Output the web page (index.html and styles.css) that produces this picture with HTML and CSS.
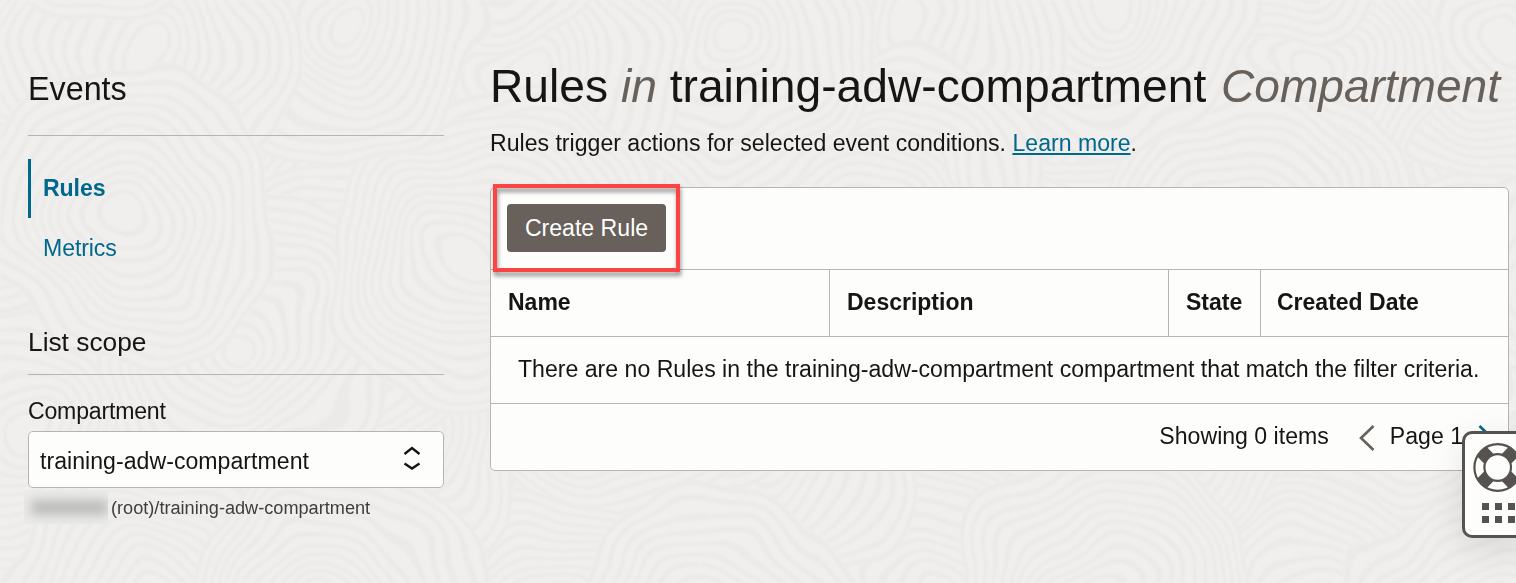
FILE: index.html
```html
<!DOCTYPE html>
<html lang="en">
<head>
<meta charset="utf-8">
<title>Events</title>
<link rel="stylesheet" href="styles.css">
</head>
<body>
<svg class="texture" width="1516" height="583" viewBox="0 0 1516 583" aria-hidden="true">
  <defs>
    <filter id="sand" x="0" y="0" width="1516" height="583" filterUnits="userSpaceOnUse" color-interpolation-filters="sRGB">
      <feTurbulence type="fractalNoise" baseFrequency=".008" numOctaves="2" seed="4" result="noise"/>
      <feDisplacementMap in="SourceGraphic" in2="noise" scale="70" xChannelSelector="R" yChannelSelector="G"/>
      <feGaussianBlur stdDeviation="1.1"/>
    </filter>
    <g id="ripple">
      <circle r="150" fill="#f0efed" stroke="none"/>
      <circle r="147"/><circle r="136"/><circle r="124"/><circle r="113"/><circle r="102"/><circle r="90"/><circle r="79"/><circle r="67"/><circle r="56"/><circle r="44"/><circle r="33"/><circle r="21"/>
    </g>
    <g id="waves">
      <use href="#ripple" x="385" y="430"/>
      <use href="#ripple" x="330" y="315"/>
      <use href="#ripple" x="20" y="430"/>
      <use href="#ripple" x="240" y="340"/>
      <use href="#ripple" x="470" y="260"/>
      <use href="#ripple" x="-10" y="180"/>
      <use href="#ripple" x="340" y="20"/>
      <use href="#ripple" x="140" y="50"/>
      <use href="#ripple" x="125" y="215"/>
      <use href="#ripple" x="110" y="-125"/>
      <use href="#ripple" x="150" y="610"/>
      <use href="#ripple" x="330" y="610"/>
    </g>
  </defs>
  <g filter="url(#sand)">
    <rect width="1516" height="583" fill="#f0efed"/>
    <g fill="none" stroke="#ebeae8" stroke-width="4">
      <use href="#waves" x="1540" y="-30"/>
      <use href="#waves" x="1155" y="20"/>
      <use href="#waves" x="770" y="-20"/>
      <use href="#waves" x="385" y="25"/>
      <use href="#waves"/>
    </g>
  </g>
</svg>
<div class="page">
  <aside class="sidebar">
    <h2 class="service">Events</h2>
    <nav class="nav">
      <a class="nav-item active">Rules</a>
      <a class="nav-item">Metrics</a>
    </nav>
    <h3 class="scope">List scope</h3>
    <div class="label">Compartment</div>
    <div class="select"><span>training-adw-compartment</span>
      <svg width="18" height="26" viewBox="0 0 18 26" fill="none" stroke="#161513" stroke-width="2.4"><path d="M1.500 8 9 2l7.500 6M1.500 17.500 9 22.500l7.500-5"/></svg>
    </div>
    <div class="path"><span class="redacted"><i></i></span><span>(root)/training-adw-compartment</span></div>
  </aside>
  <main class="main">
    <h1 class="title">Rules <em>in</em> training-adw-compartment <em class="kind">Compartment</em></h1>
    <p class="intro">Rules trigger actions for selected event conditions. <a class="link">Learn more</a>.</p>
    <section class="panel">
      <div class="toolbar"><button class="create">Create Rule</button><span class="highlight"></span></div>
      <div class="head"><div>Name</div><div>Description</div><div>State</div><div>Created Date</div></div>
      <div class="empty">There are no Rules in the training-adw-compartment compartment that match the filter criteria.</div>
      <div class="pager"><span>Showing 0 items</span>
        <svg class="prev" width="16" height="28" viewBox="0 0 16 28" fill="none" stroke="#67605b" stroke-width="2.6"><path d="M14.500 2 2 14l12.500 12"/></svg>
        <span class="page-no">Page 1</span>
        <svg class="next" width="16" height="28" viewBox="0 0 16 28" fill="none" stroke="#00688c" stroke-width="2.6"><path d="M1.500 2 14 14 1.500 26"/></svg>
      </div>
    </section>
  </main>
</div>
<div class="help">
  <svg width="52" height="101" viewBox="0 0 52 101">
    <g transform="translate(32.700 33.500)" fill="none" stroke="#56524f">
      <path transform="rotate(45)" stroke-width="13.500" d="M-22.500 0h10M12.500 0h10M0-22.500v10M0 12.500v10"/>
      <circle r="23.300" stroke-width="2.200"/>
      <circle r="13.300" fill="#fdfdfb" stroke-width="2.200"/>
    </g>
    <path fill="#56524f" d="M17 69h7v7h-7zM30 69h7v7h-7zM43 69h7v7h-7zM17 82h7v7h-7zM30 82h7v7h-7zM43 82h7v7h-7z"/>
  </svg>
</div>
</body>
</html>
```
FILE: styles.css
```css
* { box-sizing: border-box; }
body { margin: 0; width: 1516px; height: 583px; overflow: hidden; position: relative; background: #f0efed; color: #161513; font: 23.1px/28px "Liberation Sans", Arial, sans-serif; }
.texture { position: absolute; left: 0; top: 0; }
.page { position: relative; display: flex; width: 1516px; padding-left: 28px; gap: 46px; }
.sidebar { width: 416px; flex: none; }
.service { margin: 0; height: 136px; padding-top: 69px; border-bottom: 1px solid #b8b5b0; font-size: 32.300px; line-height: 40px; font-weight: 400; }
.nav { padding-top: 23px; }
.nav-item { display: block; height: 59px; padding: 16px 0 0 15px; color: #00688c; letter-spacing: -.1px; }
.nav-item.active { border-left: 3px solid #00688c; padding: 15px 0 0 12px; font-weight: 700; }
.scope { margin: 48px 0 0; height: 50px; border-bottom: 1px solid #b8b5b0; font-size: 26.300px; line-height: 34px; font-weight: 400; }
.label { margin-top: 22px; height: 34px; letter-spacing: -.2px; }
.select { height: 57px; display: flex; align-items: center; justify-content: space-between; padding: 3px 22px 0 11px; border: 1px solid #b8b5b0; border-radius: 5px; background: #fdfdfb; }
.select svg { margin-bottom: 5px; }
.select span { letter-spacing: .03px; }
.path { display: flex; align-items: center; height: 40px; gap: 3px; margin-left: -4px; font-size: 18.150px; color: #403d3a; }
.redacted { width: 84px; height: 34px; margin-top: -2px; padding: 11px 0 0 7px; background: #ebebe9; overflow: hidden; }
.redacted i { display: block; height: 13px; background: #b4b4b3; filter: blur(6px); }
.main { width: 1019px; padding-top: 58px; }
.title { margin: 0; height: 71px; font-size: 46.200px; line-height: 56px; font-weight: 400; white-space: nowrap; }
.title em { color: #67605b; }
.title .kind { margin-left: 2px; letter-spacing: -.08px; }
.intro { margin: 0; height: 58px; }
.link { color: #00688c; text-decoration: underline; text-decoration-thickness: 2px; text-underline-offset: 2px; text-decoration-skip-ink: none; }
.panel { height: 284px; border: 1px solid #b8b5b0; border-radius: 5px; background: #fdfdfb; }
.toolbar { position: relative; height: 82px; padding: 16px; border-bottom: 1px solid #b8b5b0; }
.create { display: block; width: 159px; height: 48px; padding: 0; border: 0; border-radius: 4px; background: #67605b; color: #fff; font: inherit; }
.highlight { position: absolute; left: 2px; top: -4px; width: 187px; height: 88px; border: 4px solid #fd4344; filter: drop-shadow(1px 4px 2px rgba(0,0,0,.42)); }
.head { display: grid; grid-template-columns: 339px 339px 92px 1fr; height: 67px; border-bottom: 1px solid #b8b5b0; font-weight: 700; font-size: 23px; }
.head div { padding: 18px 0 0 17px; border-right: 1px solid #b8b5b0; }
.head div:last-child { border-right: 0; padding-left: 16px; }
.empty { height: 67px; padding: 18px 0 0 27px; border-bottom: 1px solid #b8b5b0; white-space: nowrap; }
.pager { display: flex; justify-content: flex-end; height: 66px; padding: 18px 14px 0 0; }
.prev { margin: 2px 15px 0 30px; }
.page-no { margin-right: 15px; }
.next { margin-top: 2px; }
.help { position: absolute; left: 1462px; top: 431px; width: 70px; height: 107px; border: 3px solid #56524f; border-radius: 10px; background: #fdfdfb; box-shadow: 0 10px 36px rgba(0,0,0,.1); }
```
